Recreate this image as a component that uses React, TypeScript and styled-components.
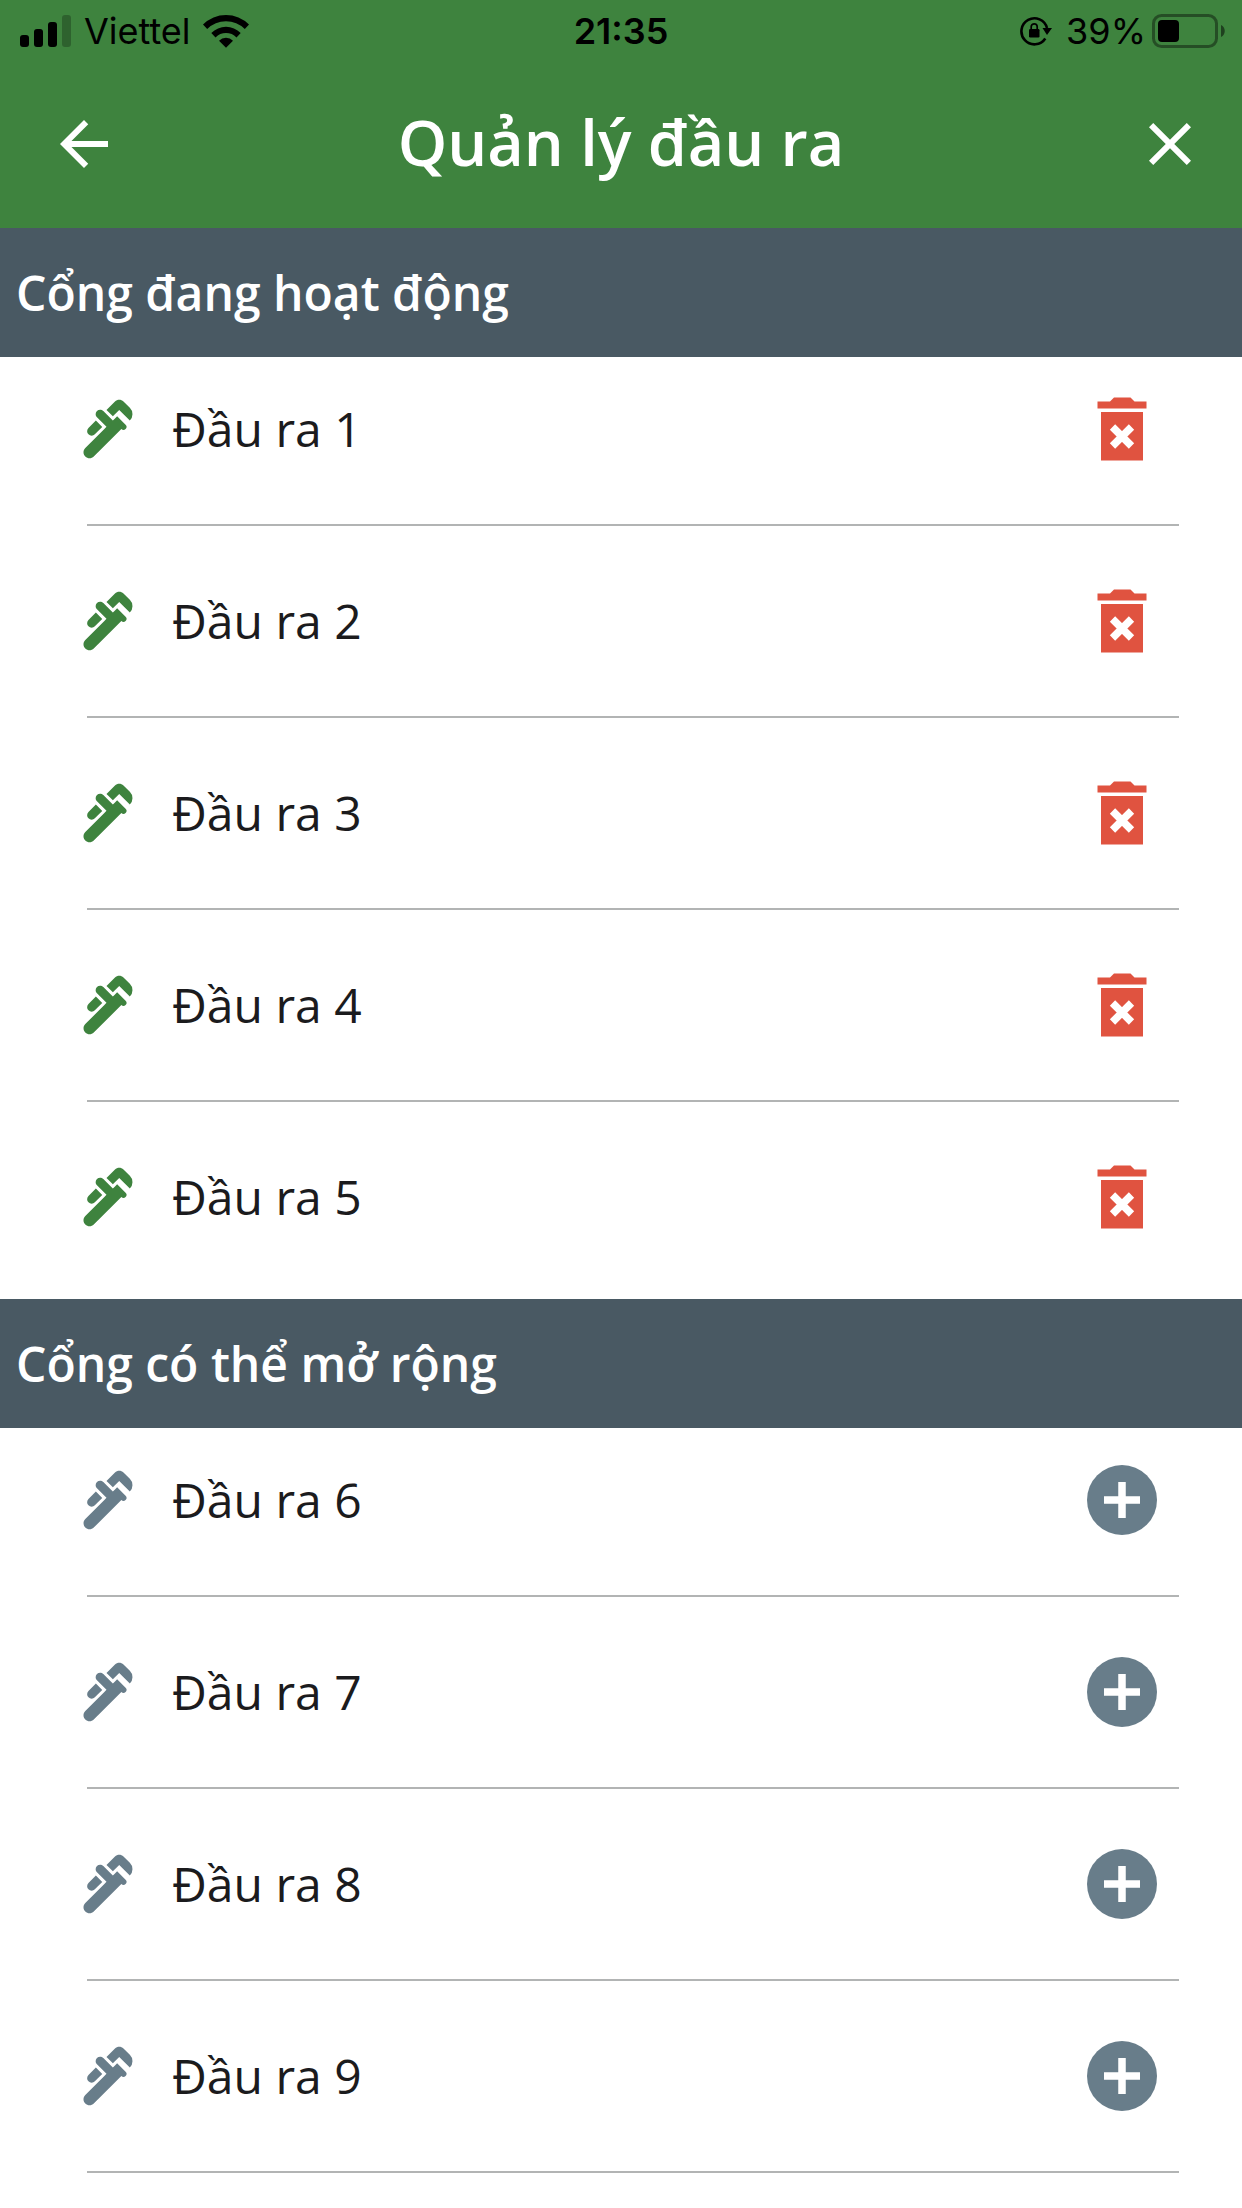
import React from "react";
import styled, { createGlobalStyle } from "styled-components";
import { MdArrowBack, MdClose, MdPlumbing } from "react-icons/md";

const colors = {
  green: "#3e833e",
  slate: "#495963",
  muted: "#687d8a",
  red: "#e05340",
  text: "#1b1b1d",
  line: "#b2b4b4",
};

const GlobalStyle = createGlobalStyle`
  *, *::before, *::after { box-sizing: border-box; }
  body { margin: 0; background: #fff; }
`;

const Screen = styled.div`
  min-height: 100vh;
  background: #fff;
  color: ${colors.text};
  font-family: "Open Sans", "Noto Sans", sans-serif;
`;

const Header = styled.header`
  background: ${colors.green};
`;

const StatusBar = styled.div`
  display: grid;
  grid-template-columns: 1fr auto 1fr;
  align-items: center;
  height: 60px;
  padding: 2px 16px 0;
  color: #000;
  font-family: Inter, "Liberation Sans", sans-serif;
  font-size: 36px;
  line-height: 44px;
`;

const StatusGroup = styled.div<{ $end?: boolean }>`
  display: flex;
  align-items: center;
  justify-content: ${(p) => (p.$end ? "flex-end" : "flex-start")};
  gap: ${(p) => (p.$end ? 6 : 12)}px;
  padding-left: 4px;
`;

const Carrier = styled.span``;

const Percent = styled.span`
  padding-left: 8px;
`;

const Clock = styled.time`
  font-weight: 600;
`;

const AppBar = styled.div`
  display: grid;
  grid-template-columns: 1fr auto 1fr;
  align-items: center;
  height: 168px;
  padding: 0 36px;
`;

const Title = styled.h1`
  margin: 0;
  padding-bottom: 4px;
  color: #fff;
  font-size: 63px;
  font-weight: 600;
  line-height: 88px;
`;

const IconButton = styled.button<{ $tone: string; $end?: boolean }>`
  display: flex;
  align-items: center;
  justify-content: center;
  justify-self: ${(p) => (p.$end ? "end" : "start")};
  width: 72px;
  height: 72px;
  padding: 0;
  border: 0;
  background: none;
  color: ${(p) => p.$tone};
  cursor: pointer;
`;

const BackButton = styled(IconButton)`
  margin-left: 12px;
`;

const SectionTitle = styled.h2`
  display: flex;
  align-items: center;
  height: 129px;
  margin: 0;
  padding: 0 16px;
  background: ${colors.slate};
  color: #fff;
  font-size: 48px;
  font-weight: 600;
  line-height: 64px;
`;

const List = styled.ul<{ $last?: boolean }>`
  margin: 0;
  padding: 0 0 ${(p) => (p.$last ? 0 : 30)}px;
  list-style: none;
`;

const Item = styled.li<{ $divided: boolean }>`
  &::after {
    content: "";
    display: ${(p) => (p.$divided ? "block" : "none")};
    height: 2px;
    margin: 23px 63px 23px 87px;
    background: ${colors.line};
  }
`;

const Row = styled.div<{ $tone: string }>`
  display: flex;
  align-items: center;
  gap: 28px;
  height: 144px;
  padding: 0 84px 0 72px;
  color: ${(p) => p.$tone};
`;

const Label = styled.span`
  flex: 1;
  color: ${colors.text};
  font-size: 48px;
  font-weight: 400;
  line-height: 64px;
`;

const SignalIcon = () => (
  <svg width="52" height="34" viewBox="0 0 52 34" aria-hidden="true">
    <rect x="0" y="21" width="9" height="12" rx="3" />
    <rect x="14" y="15" width="9" height="18" rx="3" />
    <rect x="28" y="8" width="9" height="25" rx="3" />
    <rect x="42" y="1" width="9" height="32" rx="3" opacity="0.25" />
  </svg>
);

const WifiIcon = () => (
  <svg width="46" height="34" viewBox="0 0 46 34" aria-hidden="true">
    <path d="M0 10.500a32.500 32.500 0 0 1 46 0l-4.200 4.500a26.600 26.600 0 0 0-37.600 0z" />
    <path d="M8.300 18.900a20.800 20.800 0 0 1 29.400 0l-4.200 4.500a14.800 14.800 0 0 0-21 0z" />
    <path d="M16 26.700a10 10 0 0 1 14 0l-7 7z" />
  </svg>
);

const RotationLockIcon = () => (
  <svg width="32" height="32" viewBox="0 0 32 32" aria-hidden="true">
    <path d="M25.300 23.500A13 13 0 1 1 27 13" fill="none" stroke="#000" strokeWidth="2.600" />
    <path d="M22.500 13h9.500l-5 7z" />
    <rect x="9" y="14" width="10.500" height="8.500" rx="1.200" />
    <path d="M11.200 15v-3.200a3 3 0 0 1 6 0V15" fill="none" stroke="#000" strokeWidth="1.700" />
  </svg>
);

const BatteryIcon = () => (
  <svg width="74" height="34" viewBox="0 0 74 34" aria-hidden="true">
    <rect x="1.500" y="1.500" width="63" height="31" rx="8" fill="none" stroke="#000" strokeOpacity="0.4" strokeWidth="3" />
    <rect x="6" y="6" width="21" height="22" rx="4" />
    <path d="M69 11c5 2 5 10 0 12z" opacity="0.5" />
  </svg>
);

const TrashIcon = () => (
  <svg width="72" height="72" viewBox="0 0 72 72" fill="currentColor" aria-hidden="true">
    <path d="M11.500 8.500H24l4-4h16.500l4 4h12v7h-49z" />
    <path d="M15 19h42v48.500H15z" />
    <path d="M26.500 34l19 19m0-19l-19 19" stroke="#fff" strokeWidth="7.500" />
  </svg>
);

const AddIcon = () => (
  <svg width="72" height="72" viewBox="0 0 72 72" aria-hidden="true">
    <circle cx="36" cy="36" r="35" fill="currentColor" />
    <path d="M36 18v36M18 36h36" stroke="#fff" strokeWidth="7.500" />
  </svg>
);

const activePorts = [1, 2, 3, 4, 5];
const availablePorts = [6, 7, 8, 9];

export default function App() {
  return (
    <Screen>
      <GlobalStyle />
      <Header>
        <StatusBar>
          <StatusGroup>
            <SignalIcon />
            <Carrier>Viettel</Carrier>
            <WifiIcon />
          </StatusGroup>
          <Clock>21:35</Clock>
          <StatusGroup $end>
            <RotationLockIcon />
            <Percent>39%</Percent>
            <BatteryIcon />
          </StatusGroup>
        </StatusBar>
        <AppBar>
          <BackButton $tone="#fff" aria-label="Quay lại">
            <MdArrowBack size={72} />
          </BackButton>
          <Title>Quản lý đầu ra</Title>
          <IconButton $tone="#fff" $end aria-label="Đóng">
            <MdClose size={72} />
          </IconButton>
        </AppBar>
      </Header>
      <main>
        <section>
          <SectionTitle>Cổng đang hoạt động</SectionTitle>
          <List>
            {activePorts.map((port, i) => (
              <Item key={port} $divided={i < activePorts.length - 1}>
                <Row $tone={colors.green}>
                  <MdPlumbing size={72} />
                  <Label>Đầu ra {port}</Label>
                  <IconButton $tone={colors.red} aria-label={`Xóa đầu ra ${port}`}>
                    <TrashIcon />
                  </IconButton>
                </Row>
              </Item>
            ))}
          </List>
        </section>
        <section>
          <SectionTitle>Cổng có thể mở rộng</SectionTitle>
          <List $last>
            {availablePorts.map((port) => (
              <Item key={port} $divided>
                <Row $tone={colors.muted}>
                  <MdPlumbing size={72} />
                  <Label>Đầu ra {port}</Label>
                  <IconButton $tone={colors.muted} aria-label={`Thêm đầu ra ${port}`}>
                    <AddIcon />
                  </IconButton>
                </Row>
              </Item>
            ))}
          </List>
        </section>
      </main>
    </Screen>
  );
}
